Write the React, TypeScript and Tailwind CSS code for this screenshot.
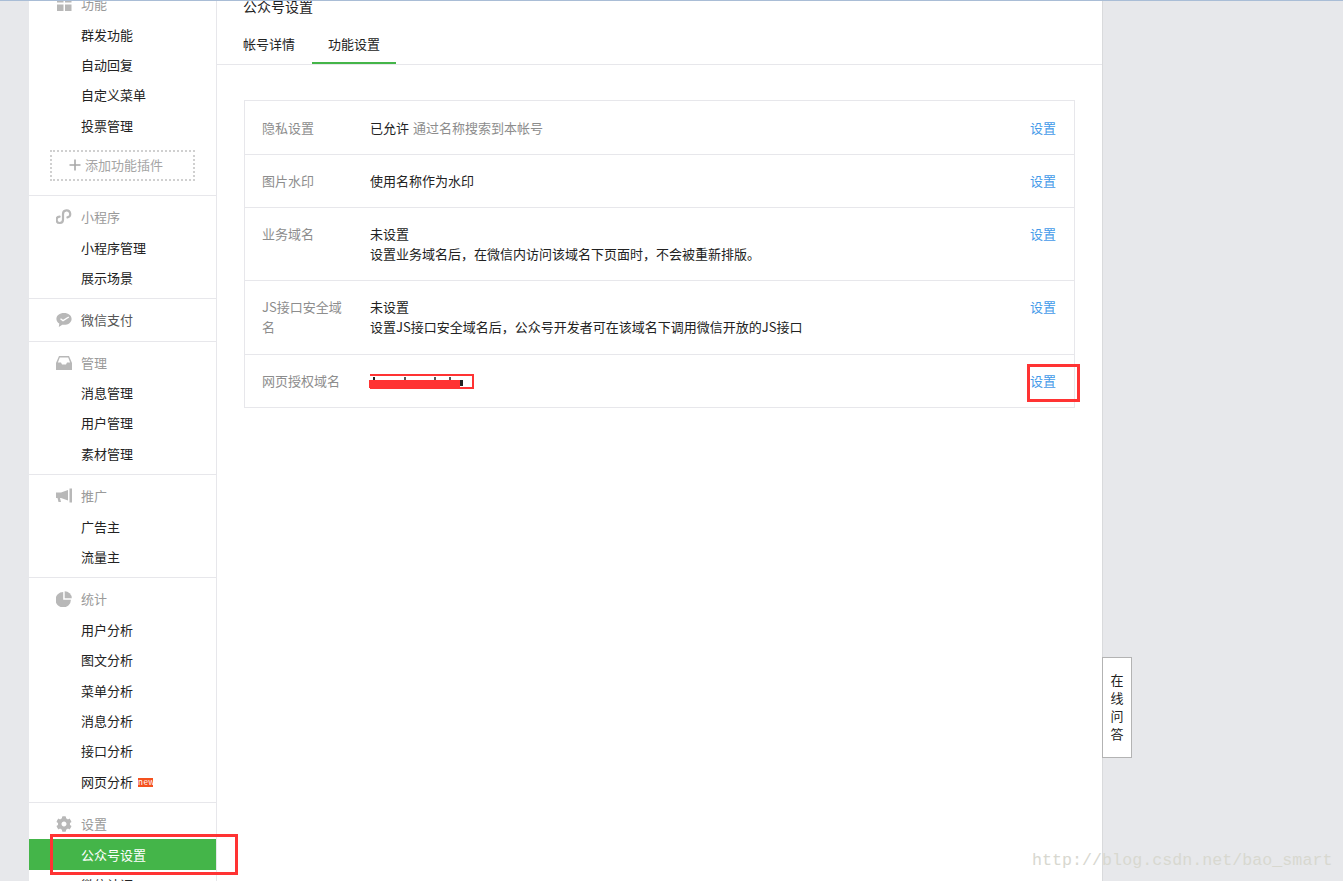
import React from "react";
import { FaCog } from "react-icons/fa";

const GridIcon = () => (
  <svg width="16" height="16" viewBox="0 0 16 16" fill="#b8b8b8">
    <rect x="1" y="0" width="6.5" height="6.5" />
    <rect x="9" y="0" width="6.5" height="6.5" />
    <rect x="1" y="8.5" width="6.5" height="6.5" />
    <rect x="9" y="8.5" width="6.5" height="6.5" />
  </svg>
);

const LinkIcon = () => (
  <svg width="16" height="16" viewBox="0 0 16 16" fill="none" stroke="#b8b8b8" strokeWidth="2.2" strokeLinecap="round">
    <path d="M3.6 7.6 A3.2 3.2 0 1 0 7 10.8 V4.9 A3.6 3.6 0 1 1 11.5 8.4" />
  </svg>
);

const PayIcon = () => (
  <svg width="16" height="16" viewBox="0 0 16 16">
    <path d="M8 1C3.6 1 .4 3.6.4 6.9c0 1.9 1.1 3.5 2.9 4.6L2.8 15l3.5-2.3c.6.1 1.1.1 1.7.1 4.4 0 7.6-2.6 7.6-5.9S12.4 1 8 1z" fill="#b8b8b8" />
    <path d="M4.5 6.8 L7 8.6 L12.8 5" fill="none" stroke="#fff" strokeWidth="1.4" />
  </svg>
);

const InboxIcon = () => (
  <svg width="16" height="16" viewBox="0 0 16 16" fill="#b8b8b8">
    <path d="M3 1h10l3 7v7H0V8zM3.8 2.5 1.9 7.5H5l1 2h4l1-2h3.1l-1.9-5z" fillRule="evenodd" />
  </svg>
);

const HornIcon = () => (
  <svg width="16" height="16" viewBox="0 0 16 16" fill="#b8b8b8">
    <path d="M0 4.5h5L12 2v10.5L5 10H4l1 4H2.5L1.5 10H0z" />
    <rect x="13.5" y="0.5" width="2.5" height="14" />
  </svg>
);

const PieIcon = () => (
  <svg width="16" height="16" viewBox="0 0 16 16" fill="#b8b8b8">
    <path d="M7.2 1v7.7h7.7A7.7 7.7 0 1 1 7.2 1z" />
    <path d="M8.7 0.2A7.4 7.4 0 0 1 15.8 7.3H8.7z" />
  </svg>
);

const PlusIcon = () => (
  <svg width="12" height="12" viewBox="0 0 12 12" stroke="#a8a8a8" strokeWidth="1.6">
    <path d="M6 0.5V11.5M0.5 6H11.5" />
  </svg>
);

const sections = [
  { icon: <GridIcon />, title: "功能", items: ["群发功能", "自动回复", "自定义菜单", "投票管理"], add: true },
  { icon: <LinkIcon />, title: "小程序", items: ["小程序管理", "展示场景"] },
  { icon: <PayIcon />, title: "微信支付", items: [], dark: true },
  { icon: <InboxIcon />, title: "管理", items: ["消息管理", "用户管理", "素材管理"] },
  { icon: <HornIcon />, title: "推广", items: ["广告主", "流量主"] },
  { icon: <PieIcon />, title: "统计", items: ["用户分析", "图文分析", "菜单分析", "消息分析", "接口分析", "网页分析"] },
  { icon: <FaCog size={16} color="#b8b8b8" />, title: "设置", items: ["公众号设置", "微信认证"] },
];

const Sidebar = () => (
  <div className="w-[188px] shrink-0 bg-white border-r border-[#e7e7eb] h-full overflow-hidden">
    <div className="-mt-[11px]">
      {sections.map((s) => (
        <div key={s.title} className="pt-[6px] pb-[5px] border-b border-[#e7e7eb] first:pt-0">
          <div className="h-[30.4px] flex items-center pl-[27px]">
            <span className="w-[25px] flex items-center">{s.icon}</span>
            <span className={s.dark ? "text-[#555]" : "text-[#9a9a9a]"}>{s.title}</span>
          </div>
          {s.items.map((item) => (
            <div
              key={item}
              className={
                item === "公众号设置"
                  ? "h-[30.4px] flex items-center pl-[52px] bg-[#44b549] text-white"
                  : "h-[30.4px] flex items-center pl-[52px] text-[#222]"
              }
            >
              {item}
              {item === "网页分析" && (
                <span className="ml-[5px] mt-[1px] w-[15px] h-[9px] bg-[#f4511e] text-white text-[8px] leading-[8px] tracking-[0.5px] text-center">
                  new
                </span>
              )}
            </div>
          ))}
          {s.add && (
            <div className="mt-[9px] mb-[9px] mx-[21px] h-[31px] border-2 border-dotted border-[#d0d0d0] flex items-center pl-[17px] text-[#a5a5a5]">
              <span className="mr-[4px] flex items-center">
                <PlusIcon />
              </span>
              添加功能插件
            </div>
          )}
        </div>
      ))}
    </div>
  </div>
);

const rows = [
  {
    label: "隐私设置",
    value: (
      <>
        已允许 <span className="ml-[1px] text-[#8d8d8d]">通过名称搜索到本帐号</span>
      </>
    ),
  },
  { label: "图片水印", value: "使用名称作为水印" },
  {
    label: "业务域名",
    value: (
      <>
        <div>未设置</div>
        <div>设置业务域名后，在微信内访问该域名下页面时，不会被重新排版。</div>
      </>
    ),
  },
  {
    label: "JS接口安全域名",
    value: (
      <>
        <div>未设置</div>
        <div>设置JS接口安全域名后，公众号开发者可在该域名下调用微信开放的JS接口</div>
      </>
    ),
  },
  {
    label: "网页授权域名",
    value: (
      <span className="relative block h-[20px]">
        <span className="absolute left-0 top-[3px] w-[104px] h-[15px] bg-white border-2 border-l-0 border-[#ff3333]">
          <span className="absolute left-[3px] top-[1px] w-[2px] h-[4px] bg-[#222]" />
          <span className="absolute left-[34px] top-[1px] w-[2px] h-[3px] bg-[#555]" />
          <span className="absolute left-[64px] top-[1px] w-[2px] h-[3px] bg-[#555]" />
          <span className="absolute left-[79px] top-[1px] w-[2px] h-[4px] bg-[#555]" />
          <span className="absolute left-[90px] top-[4px] w-[3px] h-[6px] bg-[#222]" />
          <span className="absolute -left-[1px] top-[4px] w-[91px] h-[8px] bg-[#ff3333]" />
        </span>
      </span>
    ),
  },
];

const App = () => (
  <div
    className="relative h-[881px] overflow-hidden bg-[#e7e8eb] flex pl-[29px] text-[13px] leading-[20px]"
    style={{ fontFamily: '"Noto Sans CJK SC", "Noto Sans", sans-serif' }}
  >
    <Sidebar />
    <div className="w-[886px] shrink-0 bg-white border-r border-[#d9dadc] h-full">
      <div className="-mt-[4px] pl-[26px] text-[14px] text-[#222]">公众号设置</div>
      <div className="mt-[11px] h-[38px] border-b border-[#e7e7eb] pl-[26px] flex text-[#222]">
        <div className="h-[38px] leading-[34px] pr-[17px]">帐号详情</div>
        <div className="h-[37px] leading-[33px] px-4 border-b-2 border-[#44b549]">功能设置</div>
      </div>
      <div className="mt-[35px] ml-[27px] w-[831px] border border-[#e7e7eb] border-b-0 text-[#222]">
        {rows.map((r) => (
          <div
            key={r.label}
            className="flex pt-[16px] pb-[16px] first:pt-[17px] nth-4:pb-[17px] pl-[17px] pr-[18px] border-b border-[#e7e7eb]"
          >
            <div className="w-[90px] mr-[18px] shrink-0 text-[#8d8d8d]">{r.label}</div>
            <div className="flex-1">{r.value}</div>
            <div className="text-[#459ae9]">设置</div>
          </div>
        ))}
      </div>
    </div>
    <div className="absolute left-[1102px] top-[657px] w-[30px] h-[101px] pb-[2px] bg-white border border-[#b3b3b3] flex flex-col items-center justify-center text-[#222] leading-[18px]">
      <span>在</span>
      <span>线</span>
      <span>问</span>
      <span>答</span>
    </div>
    <div className="absolute left-0 right-0 top-0 h-px bg-[#a9bdd6]" />
    <div className="absolute left-[50px] top-[834px] w-[188px] h-[41px] border-[3px] border-[#ff3333]" />
    <div className="absolute left-[1027px] top-[364px] w-[53px] h-[38px] border-[3px] border-[#ff3333]" />
    <div
      className="absolute left-[1032px] top-[851px] text-[16.7px] leading-[20px] text-[#d8d8d0] whitespace-nowrap"
      style={{ fontFamily: '"Liberation Mono", monospace' }}
    >
      http://blog.csdn.net/bao_smart
    </div>
  </div>
);

export default App;
